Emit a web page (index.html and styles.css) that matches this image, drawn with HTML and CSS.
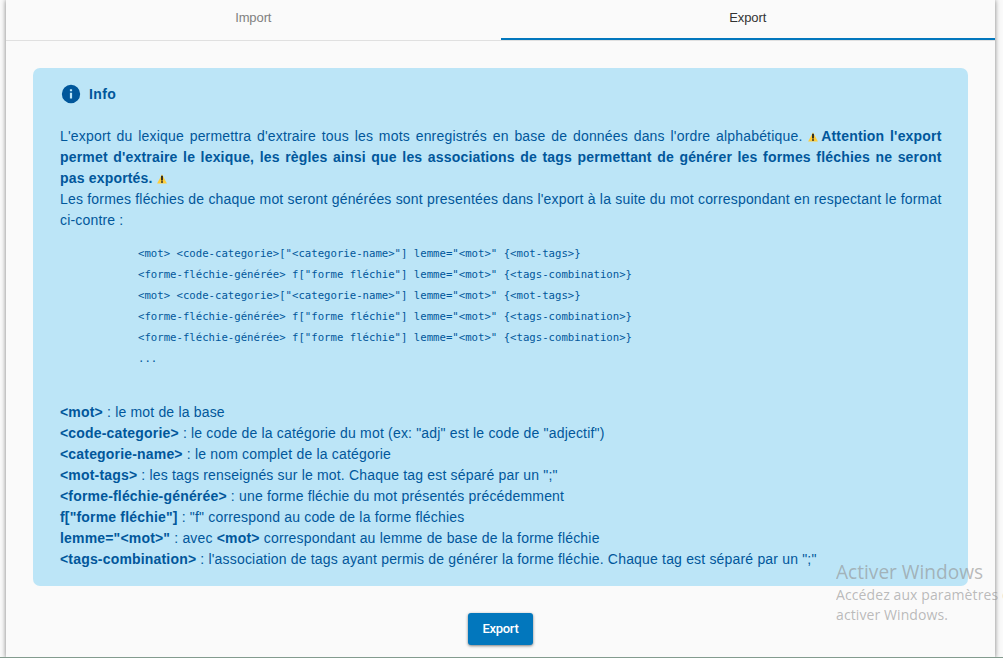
FILE: index.html
```html
<!DOCTYPE html>
<html lang="fr">
<head>
<meta charset="utf-8">
<title>Export du lexique</title>
<link rel="stylesheet" href="styles.css">
</head>
<body>
<main class="panel">
  <nav class="tabs">
    <div class="tab"><span class="tab-label">Import</span></div>
    <div class="tab active"><span class="tab-label">Export</span></div>
  </nav>
  <section class="info">
    <header class="info-head">
      <svg class="info-icon" viewBox="0 0 24 24"><path fill="currentColor" d="M12 2a10 10 0 1 0 0 20 10 10 0 0 0 0-20zm1.2 15h-2.4v-6.5h2.4zm0-8h-2.4V6.7h2.4z"/></svg>
      <b>Info</b>
    </header>
    <p class="intro">L'export du lexique permettra d'extraire tous les mots enregistrés en base de données dans l'ordre alphabétique. <svg class="warn" viewBox="0 0 10 10"><path fill="#ffcd38" d="M5 .2 9.9 9.6H.1z"/><path fill="#222" d="M4.1 1.8h1.8v4.8H4.1zm0 5.4h1.8v1.6H4.1z"/></svg><b class="strong-note">Attention l'export permet d'extraire le lexique, les règles ainsi que les associations de tags permettant de générer les formes fléchies ne seront pas exportés. <svg class="warn" viewBox="0 0 10 10"><path fill="#ffcd38" d="M5 .2 9.9 9.6H.1z"/><path fill="#222" d="M4.1 1.8h1.8v4.8H4.1zm0 5.4h1.8v1.6H4.1z"/></svg></b></p>
    <p class="intro">Les formes fléchies de chaque mot seront générées sont presentées dans l'export à la suite du mot correspondant en respectant le format <span class="nowrap">ci-contre :</span></p>
    <pre class="format">&lt;mot&gt; &lt;code-categorie&gt;["&lt;categorie-name&gt;"] lemme="&lt;mot&gt;" {&lt;mot-tags&gt;}
&lt;forme-fléchie-générée&gt; f["forme fléchie"] lemme="&lt;mot&gt;" {&lt;tags-combination&gt;}
&lt;mot&gt; &lt;code-categorie&gt;["&lt;categorie-name&gt;"] lemme="&lt;mot&gt;" {&lt;mot-tags&gt;}
&lt;forme-fléchie-générée&gt; f["forme fléchie"] lemme="&lt;mot&gt;" {&lt;tags-combination&gt;}
&lt;forme-fléchie-générée&gt; f["forme fléchie"] lemme="&lt;mot&gt;" {&lt;tags-combination&gt;}
...</pre>
    <ul class="legend">
      <li><b>&lt;mot&gt;</b> : le mot de la base</li>
      <li><b>&lt;code-categorie&gt;</b> : le code de la catégorie du mot (ex: "adj" est le code de "adjectif")</li>
      <li><b>&lt;categorie-name&gt;</b> : le nom complet de la catégorie</li>
      <li><b>&lt;mot-tags&gt;</b> : les tags renseignés sur le mot. Chaque tag est séparé par un ";"</li>
      <li><b>&lt;forme-fléchie-générée&gt;</b> : une forme fléchie du mot présentés précédemment</li>
      <li><b>f["forme fléchie"]</b> : "f" correspond au code de la forme fléchies</li>
      <li><b>lemme="&lt;mot&gt;"</b> : avec <b>&lt;mot&gt;</b> correspondant au lemme de base de la forme fléchie</li>
      <li><b>&lt;tags-combination&gt;</b> : l'association de tags ayant permis de générer la forme fléchie. Chaque tag est séparé par un ";"</li>
    </ul>
  </section>
  <button class="export">Export</button>
</main>
<aside class="watermark">
  <div class="wm-title">Activer Windows</div>
  <div class="wm-text wide">Accédez aux paramètres d</div>
  <div class="wm-text">activer Windows.</div>
</aside>
<div class="taskbar"></div>
</body>
</html>
```
FILE: styles.css
```css
* { box-sizing: border-box; }
body { margin: 0; height: 658px; overflow: hidden; position: relative; background: #fafafa; font-family: "Liberation Sans", sans-serif; }
.panel { height: 658px; margin: 0 8px 0 6px; background: #fafafa; box-shadow: 0 0 5px rgba(0,0,0,.5); display: flex; flex-direction: column; align-items: center; }
.tabs { display: flex; width: 100%; height: 41px; border-bottom: 1px solid #e0e0e0; }
.tab { flex: 1; display: flex; justify-content: center; padding-top: 9px; font-size: 13px; letter-spacing: -.1px; line-height: 17px; color: #808080; }
.tab.active { color: #333; border-bottom: 2px solid #0277bd; }
.info { width: 935px; height: 518px; margin-top: 27px; padding: 16px 27px; border-radius: 7px; background: #bce5f7; color: #01579b; font-size: 14px; line-height: 21px; letter-spacing: .18px; }
.info-head { display: flex; align-items: center; gap: 7px; height: 20px; margin-bottom: 22px; letter-spacing: .4px; }
.info-icon { width: 22px; height: 22px; }
.intro { margin: 0; width: 881.5px; text-align: justify; }
.nowrap { white-space: nowrap; }
.warn { width: 10px; height: 10px; vertical-align: -1px; }
.strong-note { margin-left: 3px; }
.format { margin: 12px 0 0 78px; font: 10.67px/21px "DejaVu Sans Mono", monospace; letter-spacing: 0; }
.legend { list-style: none; margin: 33px 0 0; padding: 0; white-space: nowrap; }
.export { width: 65px; height: 32px; margin-top: 27px; padding: 0; border: 0; border-radius: 3px; background: #0277bd; color: #fff; font: 500 13px/32px Roboto, sans-serif; letter-spacing: -.3px; box-shadow: 0 1px 3px rgba(0,0,0,.5); }
.watermark { position: absolute; left: 836px; right: 0; top: 560px; overflow: hidden; color: rgba(145,145,145,.62); font-family: "Open Sans", sans-serif; white-space: nowrap; }
.wm-title { font-size: 19.1px; line-height: 25px; }
.wm-text { font-size: 14px; line-height: 20px; letter-spacing: .1px; }
.taskbar { position: absolute; left: 0; right: 0; bottom: 0; height: 1px; background: #839b8e; }
```
